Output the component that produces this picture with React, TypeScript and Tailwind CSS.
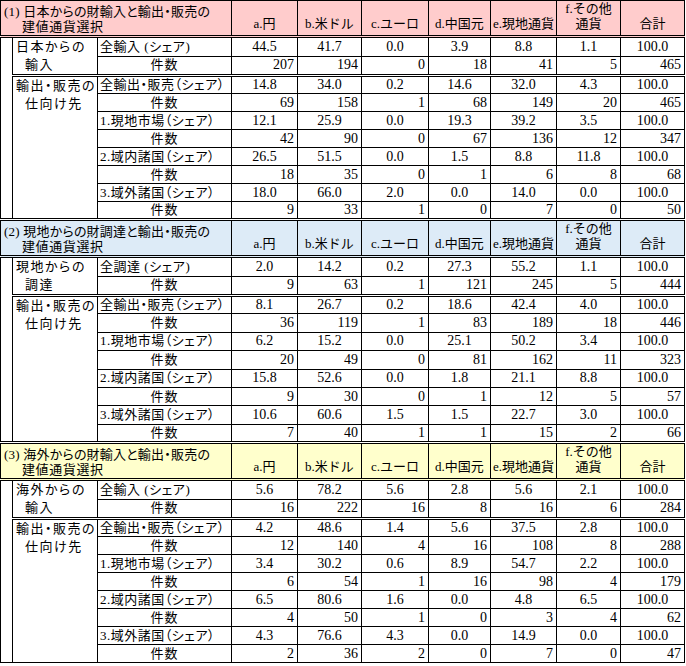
import React from 'react'

type Row = { label: string; values: string[] }

type Section = {
  title: string
  bg: string
  group1: [string, string]
  group2: [string, string]
  rows: Row[]
}

const HEADERS: React.ReactNode[] = [
  'a.円',
  'b.米ドル',
  'c.ユーロ',
  'd.中国元',
  'e.現地通貨',
  <>
    f.その他
    <br />
    通貨
  </>,
  '合計',
]

const SECTIONS: Section[] = [
  {
    title: '(1) 日本からの財輸入と輸出・販売の',
    bg: 'bg-[#ffcccc]',
    group1: ['日本からの', '輸入'],
    group2: ['輸出・販売の', '仕向け先'],
    rows: [
      { label: '全輸入 (シェア)', values: ['44.5', '41.7', '0.0', '3.9', '8.8', '1.1', '100.0'] },
      { label: '件数', values: ['207', '194', '0', '18', '41', '5', '465'] },
      { label: '全輸出・販売（シェア）', values: ['14.8', '34.0', '0.2', '14.6', '32.0', '4.3', '100.0'] },
      { label: '件数', values: ['69', '158', '1', '68', '149', '20', '465'] },
      { label: '1.現地市場（シェア）', values: ['12.1', '25.9', '0.0', '19.3', '39.2', '3.5', '100.0'] },
      { label: '件数', values: ['42', '90', '0', '67', '136', '12', '347'] },
      { label: '2.域内諸国（シェア）', values: ['26.5', '51.5', '0.0', '1.5', '8.8', '11.8', '100.0'] },
      { label: '件数', values: ['18', '35', '0', '1', '6', '8', '68'] },
      { label: '3.域外諸国（シェア）', values: ['18.0', '66.0', '2.0', '0.0', '14.0', '0.0', '100.0'] },
      { label: '件数', values: ['9', '33', '1', '0', '7', '0', '50'] },
    ],
  },
  {
    title: '(2) 現地からの財調達と輸出・販売の',
    bg: 'bg-[#ddebf7]',
    group1: ['現地からの', '調達'],
    group2: ['輸出・販売の', '仕向け先'],
    rows: [
      { label: '全調達 (シェア)', values: ['2.0', '14.2', '0.2', '27.3', '55.2', '1.1', '100.0'] },
      { label: '件数', values: ['9', '63', '1', '121', '245', '5', '444'] },
      { label: '全輸出・販売（シェア）', values: ['8.1', '26.7', '0.2', '18.6', '42.4', '4.0', '100.0'] },
      { label: '件数', values: ['36', '119', '1', '83', '189', '18', '446'] },
      { label: '1.現地市場（シェア）', values: ['6.2', '15.2', '0.0', '25.1', '50.2', '3.4', '100.0'] },
      { label: '件数', values: ['20', '49', '0', '81', '162', '11', '323'] },
      { label: '2.域内諸国（シェア）', values: ['15.8', '52.6', '0.0', '1.8', '21.1', '8.8', '100.0'] },
      { label: '件数', values: ['9', '30', '0', '1', '12', '5', '57'] },
      { label: '3.域外諸国（シェア）', values: ['10.6', '60.6', '1.5', '1.5', '22.7', '3.0', '100.0'] },
      { label: '件数', values: ['7', '40', '1', '1', '15', '2', '66'] },
    ],
  },
  {
    title: '(3) 海外からの財輸入と輸出・販売の',
    bg: 'bg-[#ffffcc]',
    group1: ['海外からの', '輸入'],
    group2: ['輸出・販売の', '仕向け先'],
    rows: [
      { label: '全輸入 (シェア)', values: ['5.6', '78.2', '5.6', '2.8', '5.6', '2.1', '100.0'] },
      { label: '件数', values: ['16', '222', '16', '8', '16', '6', '284'] },
      { label: '全輸出・販売（シェア）', values: ['4.2', '48.6', '1.4', '5.6', '37.5', '2.8', '100.0'] },
      { label: '件数', values: ['12', '140', '4', '16', '108', '8', '288'] },
      { label: '1.現地市場（シェア）', values: ['3.4', '30.2', '0.6', '8.9', '54.7', '2.2', '100.0'] },
      { label: '件数', values: ['6', '54', '1', '16', '98', '4', '179'] },
      { label: '2.域内諸国（シェア）', values: ['6.5', '80.6', '1.6', '0.0', '4.8', '6.5', '100.0'] },
      { label: '件数', values: ['4', '50', '1', '0', '3', '4', '62'] },
      { label: '3.域外諸国（シェア）', values: ['4.3', '76.6', '4.3', '0.0', '14.9', '0.0', '100.0'] },
      { label: '件数', values: ['2', '36', '2', '0', '7', '0', '47'] },
    ],
  },
]

const COL_WIDTHS = ['w-[12px]', 'w-[85px]', 'w-[134px]', 'w-[66px]', 'w-[64px]', 'w-[67px]', 'w-[62px]', 'w-[66px]', 'w-[64px]', 'w-[64px]']

function GroupLabel({ lines }: { lines: [string, string] }) {
  return (
    <div className="pl-[3px] leading-[18px] tracking-[1.5px] whitespace-nowrap [font-feature-settings:'palt']">
      <div>{lines[0]}</div>
      <div className="pl-[9px]">{lines[1]}</div>
    </div>
  )
}

function SectionRows({ s, index, last }: { s: Section; index: number; last: boolean }) {
  const topDouble = index === 0 ? 'h-[35px]' : 'border-t-[3px] h-[37px]'
  // the second block's rows run a little taller in the source sheet
  const tallRow = index === 1 ? 'h-[18.4px]' : 'h-[18px]'
  return (
    <>
      <tr className={s.bg}>
        <td
          colSpan={3}
          className={`border border-black border-double border-b-[3px] ${topDouble} p-0 pl-[3px] pt-[3px] align-top leading-[15px] whitespace-nowrap [font-feature-settings:'palt'] tracking-[0.2px]`}
        >
          <div>{s.title}</div>
          <div className="pl-[18px] tracking-[0.6px]">建値通貨選択</div>
        </td>
        {HEADERS.map((h, i) => (
          <td
            key={i}
            className={`border border-black border-double border-b-[3px] ${topDouble} p-0 pb-[4px] text-center align-bottom leading-[15px] whitespace-nowrap`}
          >
            {h}
          </td>
        ))}
      </tr>
      {s.rows.map((r, i) => {
        const isCount = i % 2 === 1
        const groupTop = i === 2 ? 'border-t-[3px]' : ''
        const sectionBottom = i === 9 && !last ? 'border-b-[3px]' : ''
        const rowH = i >= 2 ? tallRow : 'h-[18px]'
        return (
          <tr key={i}>
            {i === 0 && (
              <td rowSpan={10} className={`border border-black p-0 ${last ? '' : 'border-b-[3px] border-double'}`} />
            )}
            {i === 0 && (
              <td rowSpan={2} className="border border-black p-0 align-top">
                <GroupLabel lines={s.group1} />
              </td>
            )}
            {i === 2 && (
              <td rowSpan={8} className={`border border-black border-double ${groupTop} ${last ? '' : 'border-b-[3px]'} p-0 align-top`}>
                <GroupLabel lines={s.group2} />
              </td>
            )}
            <td
              className={`border border-black border-double ${groupTop} ${sectionBottom} ${rowH} p-0 leading-[16px] whitespace-nowrap [font-feature-settings:'palt'] ${
                isCount ? 'text-center tracking-[1px]' : 'pl-[2px] text-left tracking-[0.5px]'
              }`}
            >
              {r.label}
            </td>
            {r.values.map((v, j) => (
              <td
                key={j}
                className={`border border-black border-double ${groupTop} ${sectionBottom} ${rowH} p-0 text-[14px] leading-[16px] ${
                  isCount ? 'pr-[3px] text-right' : 'text-center'
                }`}
              >
                {v}
              </td>
            ))}
          </tr>
        )
      })}
    </>
  )
}

export default function App() {
  return (
    <div className="w-[686px] h-[666px] bg-white text-black text-[13px] font-['Liberation_Serif','Noto_Sans_CJK_JP',serif]">
      <table className="w-[685px] table-fixed border-collapse">
        <colgroup>
          {COL_WIDTHS.map((w, i) => (
            <col key={i} className={w} />
          ))}
        </colgroup>
        <tbody>
          {SECTIONS.map((s, i) => (
            <SectionRows key={i} s={s} index={i} last={i === SECTIONS.length - 1} />
          ))}
        </tbody>
      </table>
    </div>
  )
}
